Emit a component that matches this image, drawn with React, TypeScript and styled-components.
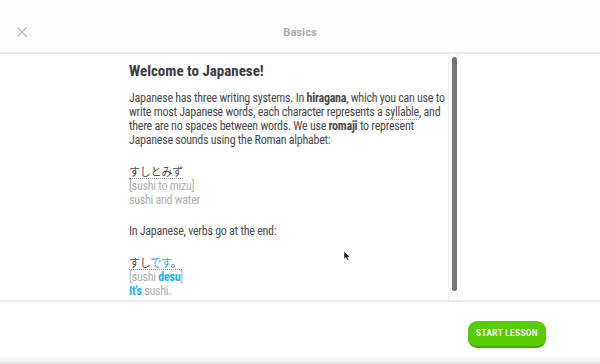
import React from 'react'
import styled, { createGlobalStyle } from 'styled-components'

const GlobalStyle = createGlobalStyle`
  html, body {
    margin: 0;
    padding: 0;
    background: #fff;
  }
  body {
    font-family: Roboto, "Noto Sans CJK JP", sans-serif;
    color: #4b4b4b;
  }
`

const Page = styled.div`
  width: 600px;
  height: 364px;
  display: flex;
  flex-direction: column;
  position: relative;
  overflow: hidden;
  background: #fff;
`

const Header = styled.header`
  height: 52px;
  flex: none;
  display: grid;
  grid-template-columns: 60px 1fr 60px;
  align-items: center;
  border-bottom: 2px solid #ebebeb;
  background: #fdfdfd;
`

const CloseButton = styled.button`
  border: 0;
  background: none;
  padding: 0;
  margin-left: 17px;
  margin-top: 12px;
  width: 10px;
  height: 10px;
  display: flex;
  cursor: pointer;
`

const Title = styled.div`
  text-align: center;
  margin-top: 13px;
  font-size: 11px;
  font-weight: 700;
  color: #acacac;
  letter-spacing: 0.1px;
`

const Body = styled.main`
  flex: 1;
  min-height: 0;
  display: flex;
  padding-left: 118px;
`

const Column = styled.div`
  width: 330px;
  height: 100%;
  overflow: hidden;
`

const Track = styled.div`
  width: 12px;
  height: 100%;
  box-sizing: border-box;
  padding: 3px 3px 9px;
  background: #fafafa;
  border-left: 1px solid #f0f0f0;
  display: flex;
`

const Thumb = styled.div`
  flex: 1;
  background: #737373;
  border-radius: 3px;
`

const Article = styled.article`
  padding: 8px 0 24px 11px;
  font-size: 12px;
  line-height: 14px;
  font-stretch: 75%;
  letter-spacing: -0.25px;
  white-space: nowrap;
`

const Heading = styled.h1`
  margin: 0 0 9.5px;
  font-size: 15px;
  line-height: 19px;
  font-weight: 700;
  font-stretch: 75%;
  letter-spacing: 0;
  color: #3c3c3c;
`

const Para = styled.p`
  margin: 0 0 17px;
`

const Dotted = styled.span`
  border-bottom: 1px dotted #9a9a9a;
`

const Example = styled.div`
  margin-bottom: 17px;
`

const Native = styled.div`
  font-family: "Noto Sans CJK JP", sans-serif;
  font-size: 11px;
  line-height: 14px;
  letter-spacing: -0.2px;
  display: inline-block;
  border-bottom: 1px dotted #9a9a9a;
`

const Romaji = styled.div`
  color: #afafaf;
`

const Meaning = styled.div`
  color: #afafaf;
`

const Hi = styled.span<{ $bold?: boolean }>`
  color: #1cb0f6;
  font-weight: ${p => (p.$bold ? 700 : 400)};
`

const Footer = styled.footer`
  height: 62px;
  flex: none;
  border-top: 2px solid #ebebeb;
  display: flex;
  align-items: center;
  justify-content: flex-end;
  padding-right: 54px;
  background: linear-gradient(to bottom, #fff 0%, #fff 86%, #ececec 98%, #d8d8d8 100%);
`

const StartButton = styled.button`
  border: 0;
  background: #58cc02;
  color: #fff;
  height: 27px;
  width: 78px;
  padding: 0;
  margin-top: 2px;
  border-radius: 9px;
  border-bottom: 2px solid #4aa800;
  font-family: Roboto, sans-serif;
  font-size: 8.2px;
  font-weight: 700;
  letter-spacing: 0.35px;
  cursor: pointer;
`

const Pointer = styled.svg`
  position: absolute;
  left: 343px;
  top: 250px;
`

const CloseIcon = () => (
  <svg width="10" height="10" viewBox="0 0 10 10">
    <path d="M0.5 0.5 L9.5 9.5 M9.5 0.5 L0.5 9.5" stroke="#b3b3b3" strokeWidth="1.1" fill="none" />
  </svg>
)

const App = () => {
  return (
    <Page>
      <GlobalStyle />
      <Header>
        <CloseButton aria-label="close">
          <CloseIcon />
        </CloseButton>
        <Title>Basics</Title>
        <div />
      </Header>

      <Body>
        <Column>
          <Article>
            <Heading>Welcome to Japanese!</Heading>
            <Para>
              Japanese has three writing systems. In <b>hiragana</b>, which you can use to
              <br />
              write most Japanese words, each character represents a <Dotted>syllable</Dotted>, and
              <br />
              there are no spaces between words. We use <b>romaji</b> to represent
              <br />
              Japanese sounds using the Roman alphabet:
            </Para>

            <Example>
              <Native>すしとみず</Native>
              <Romaji>[sushi to mizu]</Romaji>
              <Meaning>sushi and water</Meaning>
            </Example>

            <Para>In Japanese, verbs go at the end:</Para>

            <Example>
              <Native>
                すし<Hi>です</Hi>。
              </Native>
              <Romaji>
                [sushi <Hi $bold>desu</Hi>]
              </Romaji>
              <Meaning>
                <Hi $bold>It's</Hi> sushi.
              </Meaning>
            </Example>
          </Article>
        </Column>
        <Track>
          <Thumb />
        </Track>
      </Body>

      <Footer>
        <StartButton>START LESSON</StartButton>
      </Footer>

      <Pointer width="8" height="12" viewBox="0 0 8 12">
        <path d="M1 1 L1 9 L3 7.5 L4.5 10.5 L5.8 10 L4.4 7 L7 7 Z" fill="#111" stroke="#fff" strokeWidth="0.6" />
      </Pointer>
    </Page>
  )
}

export default App
